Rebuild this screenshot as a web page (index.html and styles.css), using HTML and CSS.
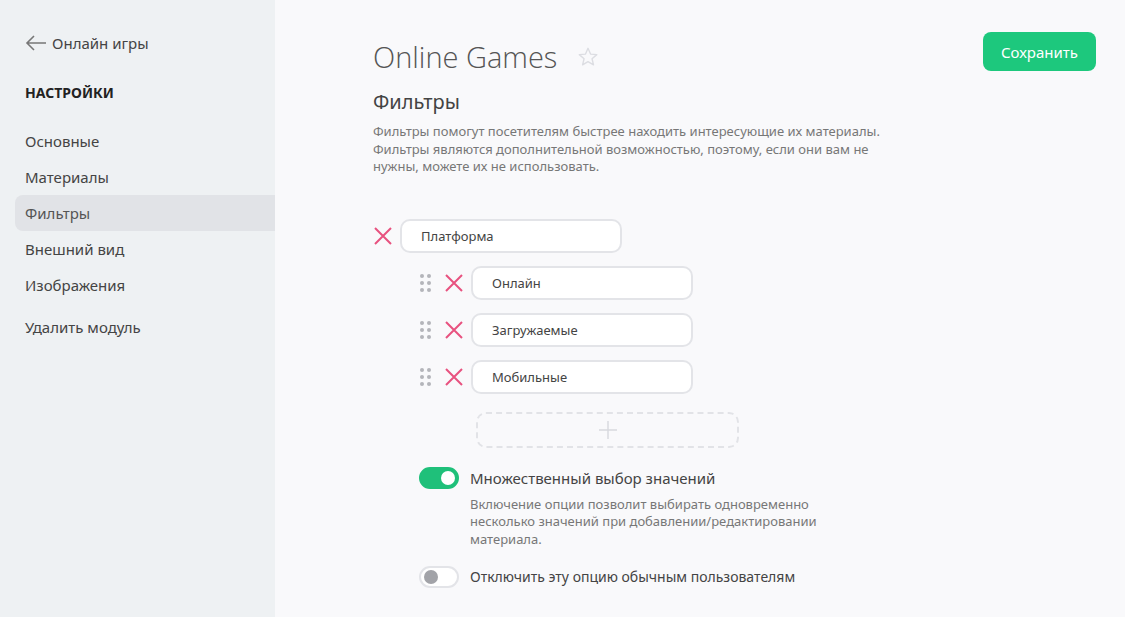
FILE: index.html
```html
<!DOCTYPE html>
<html lang="ru">
<head>
    <meta charset="UTF-8">
    <title>Online Games — Фильтры</title>
    <link rel="stylesheet" href="styles.css">
</head>
<body>
    <div class="layout">
        <aside class="sidebar">
            <a class="back" href="#">
                <svg width="22" height="16" viewBox="0 0 22 16"><path d="M21 8H2M9 1L2 8l7 7" fill="none" stroke="#777" stroke-width="1.6"/></svg>
                Онлайн игры
            </a>
            <div class="side-title">НАСТРОЙКИ</div>
            <nav class="menu">
                <a href="#">Основные</a>
                <a href="#">Материалы</a>
                <a href="#" class="active">Фильтры</a>
                <a href="#">Внешний вид</a>
                <a href="#">Изображения</a>
                <a href="#" class="remove">Удалить модуль</a>
            </nav>
        </aside>

        <main class="content">
            <div class="head">
                <h1>Online Games
                    <svg class="star" width="22" height="22" viewBox="0 0 24 24"><path d="M12 2.5l2.8 6.3 6.8.6-5.2 4.5 1.6 6.7L12 17.1l-5.9 3.5 1.6-6.7-5.2-4.5 6.8-.6z" fill="none" stroke="#dcdde2" stroke-width="1.5" stroke-linejoin="round"/></svg>
                </h1>
                <button class="save">Сохранить</button>
            </div>

            <h2>Фильтры</h2>
            <p class="lead">Фильтры помогут посетителям быстрее находить интересующие их материалы. Фильтры являются дополнительной возможностью, поэтому, если они вам не нужны, можете их не использовать.</p>

            <div class="filter">
                <div class="row">
                    <span class="del"><svg width="20" height="20" viewBox="0 0 20 20"><path d="M2 2l16 16M18 2L2 18" stroke="#e8527f" stroke-width="2"/></svg></span>
                    <div class="field">Платформа</div>
                </div>

                <div class="values">
                    <div class="row">
                        <span class="grip"><i></i><i></i><i></i><i></i><i></i><i></i></span>
                        <span class="del"><svg width="20" height="20" viewBox="0 0 20 20"><path d="M2 2l16 16M18 2L2 18" stroke="#e8527f" stroke-width="2"/></svg></span>
                        <div class="field">Онлайн</div>
                    </div>
                    <div class="row">
                        <span class="grip"><i></i><i></i><i></i><i></i><i></i><i></i></span>
                        <span class="del"><svg width="20" height="20" viewBox="0 0 20 20"><path d="M2 2l16 16M18 2L2 18" stroke="#e8527f" stroke-width="2"/></svg></span>
                        <div class="field">Загружаемые</div>
                    </div>
                    <div class="row">
                        <span class="grip"><i></i><i></i><i></i><i></i><i></i><i></i></span>
                        <span class="del"><svg width="20" height="20" viewBox="0 0 20 20"><path d="M2 2l16 16M18 2L2 18" stroke="#e8527f" stroke-width="2"/></svg></span>
                        <div class="field">Мобильные</div>
                    </div>
                    <div class="add">
                        <svg width="18" height="18" viewBox="0 0 18 18"><path d="M9 0v18M0 9h18" stroke="#d8d9de" stroke-width="1.4"/></svg>
                    </div>
                </div>

                <div class="option">
                    <span class="toggle on"></span>
                    <div>
                        <div class="opt-label">Множественный выбор значений</div>
                        <p class="opt-hint">Включение опции позволит выбирать одновременно несколько значений при добавлении/редактировании материала.</p>
                    </div>
                </div>
                <div class="option">
                    <span class="toggle"></span>
                    <div class="opt-label small">Отключить эту опцию обычным пользователям</div>
                </div>
            </div>
        </main>
    </div>
</body>
</html>
```

FILE: styles.css
```css
body {
    margin: 0;
    font-family: "Noto Sans", "Open Sans", sans-serif;
    color: #333;
    background: #f9f9fb;
}
a {
    color: inherit;
    text-decoration: none;
}
.layout {
    display: flex;
    min-height: 617px;
}
.sidebar {
    width: 275px;
    flex-shrink: 0;
    background: #eef1f3;
    padding: 33px 0 0 15px;
    box-sizing: border-box;
}
.back {
    display: flex;
    align-items: center;
    gap: 5px;
    font-size: 15px;
    color: #444;
    padding-left: 10px;
}
.side-title {
    font-size: 14px;
    font-weight: bold;
    color: #222;
    margin: 30px 0 21px 10px;
}
.menu {
    display: flex;
    flex-direction: column;
}
.menu a {
    height: 36px;
    line-height: 36px;
    padding-left: 10px;
    font-size: 15px;
    color: #444;
    border-radius: 8px 0 0 8px;
}
.menu a.active {
    background: #e1e3e7;
    color: #555;
}
.menu a.remove {
    margin-top: 6px;
}

.content {
    flex: 1;
    padding: 31px 29px 0 98px;
}
.head {
    display: flex;
    justify-content: space-between;
    align-items: flex-start;
}
h1 {
    margin: 6px 0 0;
    font-family: "Open Sans", sans-serif;
    font-weight: 300;
    font-size: 29px;
    color: #555;
    display: flex;
    align-items: center;
    gap: 20px;
}
.save {
    width: 113px;
    height: 39px;
    border: 0;
    border-radius: 8px;
    background: #1dc87d;
    color: #fff;
    font-family: inherit;
    font-size: 15px;
    margin-top: 1px;
}
h2 {
    margin: 12px 0 0;
    font-weight: normal;
    font-size: 20px;
    color: #444;
}
.lead {
    margin: 8px 0 0;
    width: 520px;
    font-size: 13px;
    line-height: 17.5px;
    color: #777;
}

.filter {
    margin-top: 43px;
}
.row {
    display: flex;
    align-items: center;
    height: 34px;
}
.del {
    width: 20px;
    height: 20px;
    margin-right: 7px;
}
.field {
    width: 222px;
    height: 34px;
    box-sizing: border-box;
    border: 2px solid #e3e4e8;
    border-radius: 10px;
    background: #fff;
    padding-left: 19px;
    font-size: 13px;
    line-height: 30px;
    color: #444;
}
.values {
    margin: 13px 0 0 47px;
    display: flex;
    flex-direction: column;
    gap: 13px;
}
.grip {
    display: grid;
    grid-template-columns: 4px 4px;
    gap: 3px 3px;
    width: 11px;
    margin-right: 13px;
}
.grip i {
    width: 4px;
    height: 4px;
    border-radius: 50%;
    background: #b4b5ba;
}
.add {
    width: 263px;
    height: 36px;
    box-sizing: border-box;
    margin: 5px 0 0 56px;
    border: 2px dashed #e2e3e7;
    border-radius: 10px;
    display: flex;
    align-items: center;
    justify-content: center;
}

.option {
    display: flex;
    gap: 11px;
    margin: 19px 0 0 46px;
}
.option + .option {
    margin-top: 18px;
    align-items: center;
}
.toggle {
    width: 40px;
    height: 22px;
    border-radius: 11px;
    box-sizing: border-box;
    border: 2px solid #e3e4e8;
    background: #fff;
    position: relative;
    flex-shrink: 0;
}
.toggle::after {
    content: "";
    position: absolute;
    top: 2px;
    left: 3px;
    width: 14px;
    height: 14px;
    border-radius: 50%;
    background: #a2a3a8;
}
.toggle.on {
    background: #1fc07a;
    border-color: #1fc07a;
}
.toggle.on::after {
    left: auto;
    right: 2px;
    background: #fff;
}
.opt-label {
    font-size: 15px;
    line-height: 22px;
    color: #444;
}
.opt-label.small {
    font-size: 14px;
}
.opt-hint {
    margin: 7px 0 0;
    width: 360px;
    font-size: 13px;
    line-height: 17.5px;
    color: #777;
}
```
